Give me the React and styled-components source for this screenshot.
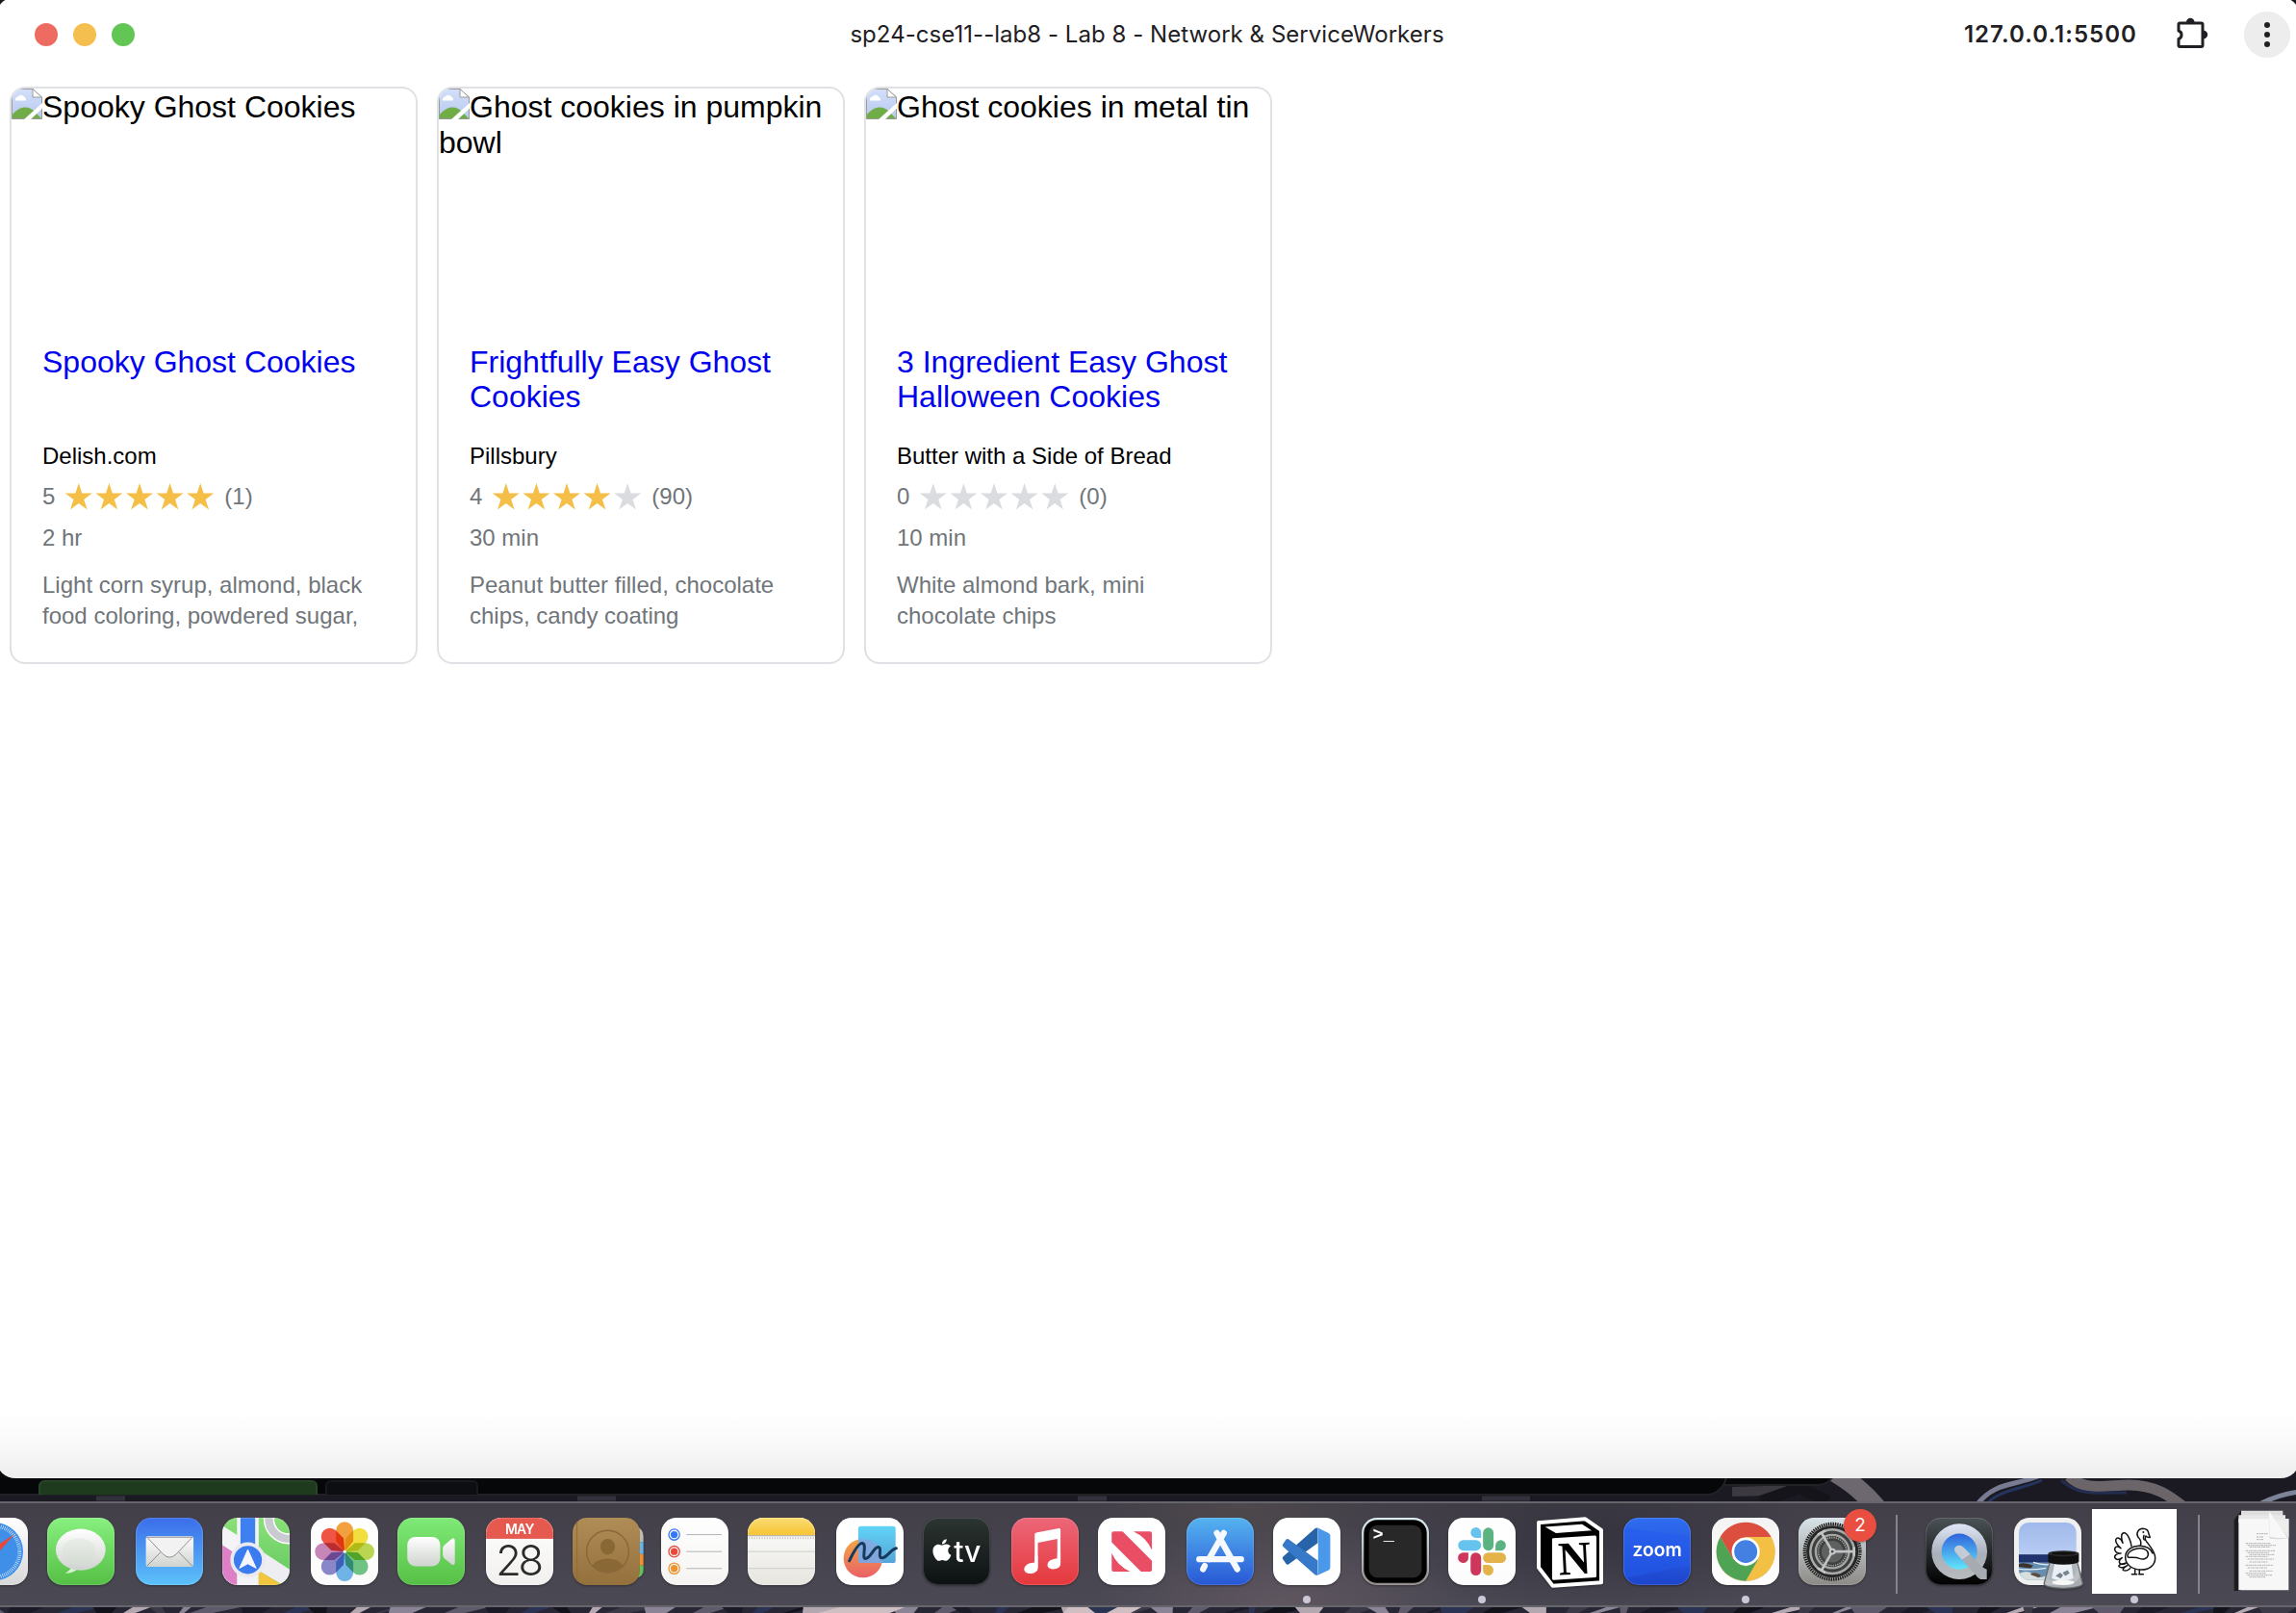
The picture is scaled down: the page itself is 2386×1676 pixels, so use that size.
import React from 'react';
import styled, { createGlobalStyle } from 'styled-components';
import { FaApple } from 'react-icons/fa';

const Global = createGlobalStyle`
  html, body { margin: 0; padding: 0; background: #17171d; }
  * { box-sizing: border-box; }
`;

const Desktop = styled.div`
  position: relative;
  display: flex;
  flex-direction: column;
  width: 2386px;
  height: 1676px;
  overflow: hidden;
  background: #17171d;
  font-family: 'Liberation Sans', Arial, sans-serif;
`;

const WallpaperSvg = styled.svg`
  position: absolute;
  left: 0;
  bottom: 0;
  width: 2386px;
  height: 150px;
`;

const BackWindow = styled.div`
  position: absolute;
  left: -30px;
  top: 1400px;
  width: ${(p) => p.$w}px;
  height: ${(p) => p.$h}px;
  border: 2px solid #222226;
  border-radius: 22px;
  background: #060709;
`;

const BackPanels = styled.div`
  display: flex;
  gap: 8px;
  padding: 136px 0 0 68px;
`;

const BackPanel = styled.div`
  width: ${(p) => p.$w}px;
  height: 15px;
  background: ${(p) => p.$bg};
  border: 2px solid ${(p) => p.$line};
  border-bottom: 0;
  border-radius: 6px 6px 0 0;
`;

const AppWindow = styled.div`
  position: relative;
  flex: none;
  display: flex;
  flex-direction: column;
  width: 2394px;
  height: 1539px;
  margin: -3px -4px 0;
  padding: 3px 4px 0;
  border-radius: 20px;
  background: linear-gradient(#fff 0, #fff 1470px, #f9f9f9 1505px, #ededed 1539px);
`;

const TitleBar = styled.header`
  display: grid;
  grid-template-columns: 1fr auto 1fr;
  align-items: center;
  height: 72px;
  padding: 0 6px 0 36px;
  font-family: Inter, sans-serif;
  color: #1f2024;
`;

const Lights = styled.div`
  display: flex;
  gap: 16px;
`;

const Light = styled.span`
  width: 24px;
  height: 24px;
  border-radius: 50%;
  background: ${(p) => p.$c};
`;

const PageTitle = styled.h1`
  margin: 0 32px 0 0;
  font-size: 24px;
  line-height: 30px;
  font-weight: 400;
  letter-spacing: 0.04px;
  white-space: nowrap;
`;

const Tools = styled.div`
  display: flex;
  justify-content: flex-end;
  align-items: center;
`;

const Address = styled.span`
  margin-right: 39px;
  font-size: 24px;
  line-height: 30px;
  font-weight: 600;
  letter-spacing: 1.05px;
`;

const Puzzle = styled.svg`
  width: 36px;
  height: 36px;
  margin-right: 36px;
`;

const MenuButton = styled.button`
  display: flex;
  flex-direction: column;
  align-items: center;
  justify-content: center;
  gap: 4px;
  width: 48px;
  height: 48px;
  padding: 0;
  border: 0;
  border-radius: 50%;
  background: #ededed;
`;

const MenuDot = styled.span`
  width: 6px;
  height: 6px;
  border-radius: 50%;
  background: #1f2024;
`;

const Recipes = styled.main`
  display: flex;
  align-items: flex-start;
  gap: 20px;
  padding: 18px 10px 0;
`;

const Card = styled.article`
  display: grid;
  grid-template-rows: 236px 112px 28px 36px 30px 72px;
  row-gap: 10px;
  align-items: center;
  width: 424px;
  padding: 0 32px 32px;
  border: 2px solid #dfe1e5;
  border-radius: 16px;
`;

const Missing = styled.div`
  height: 236px;
  margin: 0 -32px;
  border-radius: 14px 14px 0 0;
  overflow: hidden;
  font-size: 32px;
  line-height: 37px;
  color: #000;
`;

const AltText = styled.span`
  display: block;
  padding-top: 1px;
`;

const BrokenIcon = styled.svg`
  float: left;
  width: 32px;
  height: 32px;
`;

const Title = styled.p`
  height: 72px;
  margin: 0;
  font-size: 32px;
  line-height: 36px;
`;

const TitleLink = styled.a`
  color: #0000ee;
  text-decoration: none;
`;

const Org = styled.p`
  margin: 0;
  font-size: 24px;
  color: #000;
`;

const Rating = styled.div`
  display: flex;
  align-items: center;
  gap: 10px;
  font-size: 24px;
  color: #70757a;
`;

const Stars = styled.svg`
  width: 156px;
  height: 28px;
`;

const Time = styled.time`
  font-size: 24px;
  color: #70757a;
`;

const Ingredients = styled.p`
  height: 72px;
  margin: 0;
  padding-top: 8px;
  overflow: hidden;
  font-size: 24px;
  line-height: 32px;
  color: #70757a;
`;

const Dock = styled.nav`
  position: relative;
  flex: none;
  display: flex;
  align-items: flex-start;
  height: 110px;
  margin-top: 24px;
  border-top: 2px solid #67656c;
  border-bottom: 2px solid #67656c;
  background:
    radial-gradient(ellipse 190px 90px at 1330px 100%, rgba(112, 98, 106, 0.55), transparent),
    radial-gradient(ellipse 150px 70px at 1290px 0, rgba(82, 76, 76, 0.7), transparent),
    radial-gradient(ellipse 220px 90px at 1660px 30%, rgba(50, 48, 58, 0.8), transparent),
    linear-gradient(#423f49, #4b4954);
`;

const Apps = styled.div`
  display: flex;
  margin-left: -41px;
`;

const DockItem = styled.div`
  position: relative;
  flex: none;
  display: flex;
  flex-direction: column;
  align-items: center;
  width: 70px;
  height: 106px;
  padding-top: 15px;
  margin-right: ${(p) => p.$gap}px;
`;

const Icon = styled.svg`
  flex: none;
  display: block;
  width: 70px;
  height: 70px;
  overflow: visible;
  filter: drop-shadow(0 1px 1px rgba(0, 0, 0, 0.35));
`;

const Running = styled.span`
  width: 8px;
  height: 8px;
  margin-top: 11px;
  border-radius: 50%;
  background: #cbc7d6;
`;

const Badge = styled.span`
  position: absolute;
  left: 47px;
  top: 6px;
  width: 34px;
  height: 34px;
  border-radius: 50%;
  background: #e94e40;
  color: #fff;
  font: 400 19px/34px Inter, sans-serif;
  text-align: center;
  box-shadow: 0 1px 2px rgba(0, 0, 0, 0.3);
`;

const Separator = styled.span`
  flex: none;
  width: 2px;
  height: 82px;
  margin: 12px ${(p) => p.$right}px 0 ${(p) => p.$left}px;
  background: #85838b;
`;

const BigApp = styled.div`
  flex: none;
  display: flex;
  flex-direction: column;
  align-items: center;
  width: 88px;
  padding-top: 6px;
`;

const TurkeySvg = styled.svg`
  display: block;
  width: 88px;
  height: 88px;
  background: #fff;
`;

const BigRunning = styled(Running)`
  margin-top: 2px;
`;

const PapersSvg = styled.svg`
  flex: none;
  width: 58px;
  height: 86px;
  margin-top: 7px;
  overflow: visible;
`;

const STAR = 'M14 0 L17.4 10.6 H28 L19.4 16.9 L22.8 27.5 L14 21 L5.2 27.5 L8.6 16.9 L0 10.6 H10.6 Z';

const recipes = [
  { alt: 'Spooky Ghost Cookies', title: 'Spooky Ghost Cookies', org: 'Delish.com', score: 5, count: 1, time: '2 hr', ing: 'Light corn syrup, almond, black food coloring, powdered sugar,' },
  { alt: 'Ghost cookies in pumpkin bowl', title: 'Frightfully Easy Ghost Cookies', org: 'Pillsbury', score: 4, count: 90, time: '30 min', ing: 'Peanut butter filled, chocolate chips, candy coating' },
  { alt: 'Ghost cookies in metal tin', title: '3 Ingredient Easy Ghost Halloween Cookies', org: 'Butter with a Side of Bread', score: 0, count: 0, time: '10 min', ing: 'White almond bark, mini chocolate chips' },
];

function Broken() {
  return (
    <BrokenIcon viewBox="0 0 32 32">
      <defs>
        <linearGradient id="sky" x1="0" y1="0" x2="0" y2="1">
          <stop offset="0" stopColor="#d3e0fb" />
          <stop offset="1" stopColor="#b6c8ee" />
        </linearGradient>
      </defs>
      <path d="M.5 .5H22L31.500 9V31.500H.5Z" fill="url(#sky)" stroke="#9a9a9a" />
      <path d="M4 12.500a3 3 0 0 1 2.500-4 4 4 0 0 1 7 .5 2.200 2.200 0 0 1 1 3.500Z" fill="#fff" />
      <path d="M1 31V27C8 18 18 17 24 24L31 31Z" fill="#70ad47" />
      <path d="M13 32L32 15V20.500L20 32Z" fill="#fff" />
      <path d="M22 .5V9H31.500Z" fill="#fff" stroke="#9a9a9a" />
    </BrokenIcon>
  );
}

function Recipe({ r }) {
  return (
    <Card>
      <Missing><Broken /><AltText>{r.alt}</AltText></Missing>
      <Title><TitleLink>{r.title}</TitleLink></Title>
      <Org>{r.org}</Org>
      <Rating>
        <span>{r.score}</span>
        <Stars viewBox="0 0 156 28">
          {[0, 1, 2, 3, 4].map((i) => (
            <path key={i} d={STAR} transform={`translate(${0.8 + i * 31.6} 0)`} fill={i < r.score ? '#f4be47' : '#dadce0'} />
          ))}
        </Stars>
        <span>({r.count})</span>
      </Rating>
      <Time>{r.time}</Time>
      <Ingredients>{r.ing}</Ingredients>
    </Card>
  );
}

function Tile({ id, from, to, children }) {
  return (
    <Icon viewBox="0 0 211 211">
      <defs>
        <linearGradient id={`${id}-bg`} x1="0" y1="0" x2="0" y2="1">
          <stop offset="0" stopColor={from} />
          <stop offset="1" stopColor={to} />
        </linearGradient>
        <clipPath id={`${id}-clip`}><rect width="211" height="211" rx="48" /></clipPath>
        <linearGradient id={`${id}-w`} x1="0" y1="0" x2="0" y2="1">
          <stop offset="0" stopColor="#fff" />
          <stop offset="1" stopColor="#cfd3cf" />
        </linearGradient>
      </defs>
      <rect width="211" height="211" rx="48" fill={`url(#${id}-bg)`} />
      <g clipPath={`url(#${id}-clip)`}>{children}</g>
      <rect x="1" y="1" width="209" height="209" rx="47" fill="none" stroke="#fff" strokeOpacity=".25" strokeWidth="2" />
    </Icon>
  );
}

const Safari = () => (
  <Tile id="saf" from="#ffffff" to="#d8d8d8">
    <circle cx="105" cy="106" r="91" fill="#3f8fe8" />
    <circle cx="105" cy="106" r="80" fill="none" stroke="#d5e8fb" strokeWidth="12" strokeDasharray="2 4" />
    <path d="M168 53L97 97L114 114Z" fill="#e8483b" />
    <path d="M42 168L97 97L114 114Z" fill="#f4f4f4" />
  </Tile>
);

const Messages = () => (
  <Tile id="msg" from="#87f07f" to="#55bf45">
    <path d="M78 145Q76 165 56 174Q82 174 98 158Z" fill="#d6f0d2" />
    <ellipse cx="105" cy="100" rx="78" ry="65" fill="url(#msg-w)" />
    <ellipse cx="100" cy="104" rx="52" ry="40" fill="#cfe0cc" opacity=".3" />
  </Tile>
);

const Mail = () => (
  <Tile id="mail" from="#3b6dea" to="#5cc2fa">
    <rect x="32" y="58" width="149" height="96" rx="7" fill="url(#mail-w)" />
    <path d="M36 151L78 108M177 151L135 108" stroke="#8f8f8f" strokeWidth="3" fill="none" />
    <path d="M35 61L86 114Q106 134 127 114L178 61Z" fill="#f2f2f2" stroke="#8f8f8f" strokeWidth="3" />
  </Tile>
);

const Maps = () => (
  <Tile id="maps" from="#8bdf78" to="#60c95e">
    <path d="M0 25L48 55V211H0Z" fill="#f4f4f6" />
    <path d="M0 85L50 118V211H0Z" fill="#dd80c6" />
    <rect x="46" width="68" height="211" fill="#f3f3f7" />
    <path d="M100 90L211 162V211H190L100 158Z" fill="#ededf2" />
    <path d="M114 166L188 211H114Z" fill="#f3c53d" />
    <rect x="57" width="46" height="110" fill="#3f80f0" />
    <circle cx="208" cy="4" r="62" fill="none" stroke="#fff" strokeWidth="34" />
    <circle cx="208" cy="4" r="62" fill="none" stroke="#c9cbd1" strokeWidth="25" />
    <circle cx="80" cy="132" r="55" fill="#e9e9ef" />
    <circle cx="80" cy="132" r="44" fill="#3a7bf0" />
    <path d="M80 100L106 158L80 144L54 158Z" fill="#f5f6fa" stroke="#f5f6fa" strokeWidth="3" strokeLinejoin="round" />
  </Tile>
);

const PETALS = ['#f2a13e', '#f2df3e', '#b9d552', '#70c383', '#70b3e6', '#8a87c9', '#c687b8', '#ee5542'];

const Petal = styled.path`
  mix-blend-mode: multiply;
`;

const Photos = () => (
  <Tile id="pho" from="#ffffff" to="#fbfbfb">
    {PETALS.map((c, i) => (
      <Petal key={c} d="M106 106L79 74V40a27 27 0 0 1 54 0V74Z" fill={c} transform={`rotate(${i * 45} 106 106)`} />
    ))}
    <circle cx="106" cy="106" r="5" fill="#fff" />
  </Tile>
);

const FaceTime = () => (
  <Tile id="ft" from="#80ea78" to="#55bf45">
    <rect x="31" y="60" width="103" height="92" rx="25" fill="url(#ft-w)" />
    <path d="M142 96Q142 90 147 86L170 66Q180 60 180 72V140Q180 152 170 146L147 127Q142 123 142 117Z" fill="url(#ft-w)" />
  </Tile>
);

const Calendar = () => (
  <Tile id="cal" from="#ffffff" to="#f1f0ee">
    <rect width="211" height="66" fill="#e5594f" />
    <text x="106" y="51" textAnchor="middle" fontFamily="Inter, sans-serif" fontSize="42" fontWeight="600" fill="#fff" textLength="92">MAY</text>
    <text x="106" y="180" textAnchor="middle" fontFamily="Inter, sans-serif" fontSize="131" fontWeight="300" fill="#2b2b2b" textLength="150">28</text>
  </Tile>
);

const Contacts = () => (
  <Icon viewBox="0 0 211 211">
    <defs>
      <linearGradient id="con-b" x1="0" y1="0" x2="0" y2="1">
        <stop offset="0" stopColor="#b08c56" />
        <stop offset="1" stopColor="#94703d" />
      </linearGradient>
      <clipPath id="con-c"><circle cx="110" cy="106" r="65" /></clipPath>
    </defs>
    <path d="M200 27q22 8 22 32v17h-22z" fill="#bcbab4" />
    <rect x="200" y="76" width="22" height="38" fill="#62b5ef" />
    <rect x="200" y="114" width="22" height="36" fill="#f08f2e" />
    <path d="M200 150h22v15q0 18-22 24z" fill="#5fc35c" />
    <rect width="211" height="211" rx="46" fill="url(#con-b)" />
    <path d="M14 12V199" stroke="#8f6c3a" strokeWidth="3" />
    <circle cx="110" cy="106" r="66" fill="none" stroke="#87673a" strokeWidth="4" />
    <ellipse cx="110" cy="91" rx="23" ry="25" fill="#8a6836" />
    <ellipse cx="110" cy="166" rx="53" ry="38" fill="#8a6836" clipPath="url(#con-c)" />
  </Icon>
);

const Reminders = () => (
  <Tile id="rem" from="#ffffff" to="#f5f4f2">
    {[['#3478f6', 53], ['#e74a3c', 106], ['#eb9430', 159]].map(([c, y]) => (
      <g key={c}>
        <circle cx="41" cy={y} r="17" fill="none" stroke={c} strokeWidth="4" />
        <circle cx="41" cy={y} r="11" fill={c} />
        <path d={`M79 ${y}H190`} stroke="#b3b3b6" strokeWidth="3" />
      </g>
    ))}
  </Tile>
);

const Notes = () => (
  <Tile id="not" from="#ffffff" to="#e6e5df">
    <defs>
      <linearGradient id="not-y" x1="0" y1="0" x2="0" y2="1"><stop offset="0" stopColor="#fbdc74" /><stop offset="1" stopColor="#f6c433" /></linearGradient>
    </defs>
    <rect width="211" height="54" fill="url(#not-y)" />
    <path d="M0 56H211" stroke="#b9b5a6" strokeWidth="4" />
    <path d="M4 64H211" stroke="#bdbdba" strokeWidth="6" strokeDasharray="3 5" />
    <path d="M0 106H211M0 159H211" stroke="#cfcfcd" strokeWidth="3" />
  </Tile>
);

const Freeform = () => (
  <Tile id="fre" from="#ffffff" to="#ffffff">
    <defs>
      <linearGradient id="fre-o" x1="0" y1="0" x2="0" y2="1"><stop offset="0" stopColor="#f2a843" /><stop offset="1" stopColor="#ea6168" /></linearGradient>
      <linearGradient id="fre-s" x1="0" y1="0" x2="0" y2="1"><stop offset="0" stopColor="#61d4f7" /><stop offset="1" stopColor="#56a5d9" /></linearGradient>
    </defs>
    <circle cx="84" cy="127" r="61" fill="url(#fre-o)" />
    <rect x="69" y="26" width="117" height="116" rx="8" fill="url(#fre-s)" />
    <path d="M69 66H84A61 61 0 0 1 143 142H77Q69 142 69 134Z" fill="#8da4dc" opacity=".75" />
    <path d="M41 135C52 112 70 78 82 80C98 83 78 128 92 128C108 128 118 90 132 92C146 94 128 124 142 126C156 128 172 98 188 96" fill="none" stroke="#16395c" strokeWidth="9" strokeLinecap="round" />
  </Tile>
);

const Tv = () => (
  <Tile id="tv" from="#2c3531" to="#0c1012">
    <FaApple x="21" y="62" size={78} color="#fff" />
    <text x="97" y="138" fontFamily="Inter, sans-serif" fontSize="90" fontWeight="500" fill="#fff" textLength="85" lengthAdjust="spacingAndGlyphs">tv</text>
  </Tile>
);

const Music = () => (
  <Tile id="mus" from="#ec6779" to="#e5383d">
    <g fill="#fff">
      <path d="M73 53Q73 48 78 47L149 33Q154 32 154 38V142H144V66L83 78V156H73Z" />
      <path d="M83 150V158C83 168 70 176 56 175C44 174 38 166 41 157C46 143 60 142 73 140V120H83Z" />
      <path d="M154 138V145C154 155 144 161 130 161C116 160 111 152 114 143C118 131 132 129 144 127V110H154Z" />
    </g>
  </Tile>
);

const News = () => (
  <Tile id="new" from="#ffffff" to="#ffffff">
    <g fill="#e94e64">
      <path d="M43 49Q43 43 49 43H77L169 135V163Q169 169 163 169H135L43 77Z" />
      <path d="M111 43H163Q169 43 169 49V101Q151 61 111 43Z" />
      <path d="M43 111Q61 151 101 169H49Q43 169 43 163Z" />
    </g>
  </Tile>
);

const AppStore = () => (
  <Tile id="aps" from="#55b3f0" to="#2857d6">
    <g stroke="#f5f8fd" strokeWidth="19" strokeLinecap="round" fill="none">
      <path d="M40 130H171" />
      <path d="M117 48L70 130" />
      <path d="M95 48L159 161" />
      <path d="M57 151L52 161" />
    </g>
  </Tile>
);

const VsCode = () => (
  <Tile id="vsc" from="#ffffff" to="#ffffff">
    <path d="M31 130Q27 126 32 121L132 33L140 32V79L48 146Q44 148 41 145Z" fill="#2763a8" />
    <path d="M31 82Q27 86 32 91L132 179L140 180V134L48 67Q44 65 41 68Z" fill="#3579c8" />
    <path d="M138 31L174 48Q179 51 179 56V156Q179 161 174 164L138 181Q141 178 141 172V40Q141 34 138 31Z" fill="#4a98ea" />
  </Tile>
);

const Terminal = () => (
  <Tile id="ter" from="#d9ecf2" to="#8a8782">
    <rect x="7" y="7" width="197" height="197" rx="41" fill="#000" />
    <rect x="23" y="23" width="165" height="165" rx="27" fill="#282828" />
    <text x="35" y="70" fontFamily="'Liberation Mono', monospace" fontSize="56" fontWeight="700" fill="#fff">&gt;_</text>
  </Tile>
);

const Slack = () => (
  <Tile id="sla" from="#ffffff" to="#fcfcfc">
    <g fill="#66c3ee"><rect x="31" y="70" width="72" height="33" rx="16.500" /><path d="M103 63H86.500A16.300 16.300 0 1 1 103 47Z" /></g>
    <g fill="#5bb381"><rect x="109" y="31" width="33" height="72" rx="16.500" /><path d="M148 103V86.500A16.300 16.300 0 1 1 164 103Z" /></g>
    <g fill="#e3b34a"><rect x="109" y="109" width="72" height="33" rx="16.500" /><path d="M109 148H125.500A16.300 16.300 0 1 1 109 164Z" /></g>
    <g fill="#ce375c"><rect x="70" y="109" width="33" height="72" rx="16.500" /><path d="M63 109V125.500A16.300 16.300 0 1 1 47 109Z" /></g>
  </Tile>
);

const Notion = () => (
  <Icon viewBox="0 0 211 211">
    <path d="M13 15L152 4L202 39V203L50 213L6 156V15Z" fill="#000" stroke="#fff" strokeWidth="12" strokeLinejoin="round" />
    <path d="M26 29L142 20L172 40L60 48Z" fill="#fff" />
    <path d="M48 68Q48 64 52 64L182 56Q187 56 187 61V182Q187 187 182 187L52 195Q48 195 48 191Z" fill="#fff" />
    <text x="118" y="177" textAnchor="middle" fontFamily="'Liberation Serif', serif" fontSize="148" fontWeight="700" fill="#000" transform="rotate(-3 118 125)" textLength="102" lengthAdjust="spacingAndGlyphs">N</text>
  </Icon>
);

const Zoom = () => (
  <Tile id="zoo" from="#2f6df0" to="#1d45cc">
    <path d="M0 30L211 60V150L0 190Z" fill="#235af0" opacity=".5" />
    <text x="29" y="121" fontFamily="Inter, sans-serif" fontSize="60" fontWeight="600" fill="#fff" textLength="154" lengthAdjust="spacingAndGlyphs">zoom</text>
  </Tile>
);

const Chrome = () => (
  <Tile id="chr" from="#f3f3f3" to="#ffffff">
    <circle cx="106" cy="108" r="92" fill="#c9a24a" opacity=".5" />
    <path d="M26.300 60A92 92 0 0 1 185.700 60H106L66 129Z" fill="#dc4f3f" />
    <path d="M185.700 60A92 92 0 0 1 106 198L146 129L106 60Z" fill="#f3c043" />
    <path d="M106 198A92 92 0 0 1 26.300 60L66 129L106 152L146 129Z" fill="#4fa354" />
    <circle cx="106" cy="106" r="44" fill="#fff" />
    <circle cx="106" cy="106" r="36" fill="#447fe2" />
  </Tile>
);

const Settings = () => (
  <Tile id="set" from="#d8e4ea" to="#8c8a85">
    <circle cx="106" cy="106" r="87" fill="#a8a9a8" />
    <circle cx="106" cy="106" r="87" fill="none" stroke="#1c1c1c" strokeWidth="10" strokeDasharray="4.200 3" />
    <circle cx="106" cy="106" r="77" fill="#a9aaaa" stroke="#262626" strokeWidth="9" />
    <circle cx="106" cy="106" r="65" fill="#3e3f3f" />
    <circle cx="106" cy="106" r="52" fill="none" stroke="#a5a5a4" strokeWidth="7" />
    <circle cx="106" cy="106" r="44" fill="none" stroke="#9b9b9a" strokeWidth="5" strokeDasharray="4 3" />
    <circle cx="106" cy="106" r="34" fill="#5f6060" />
    {[0, 120, 240].map((a) => (
      <path key={a} d="M106 106H176M174 92V120" stroke="#bfc4c5" strokeWidth="8" fill="none" transform={`rotate(${a} 106 106)`} />
    ))}
    <circle cx="106" cy="106" r="10" fill="#c6caca" />
    <circle cx="106" cy="106" r="4" fill="#4d4e4e" />
  </Tile>
);

const QuickTime = () => (
  <Tile id="qt" from="#4b5256" to="#000000">
    <defs>
      <linearGradient id="qt-s" x1="0" y1="0" x2="0" y2="1"><stop offset="0" stopColor="#dfe6f6" /><stop offset=".55" stopColor="#a9b0ba" /><stop offset="1" stopColor="#b9bbbd" /></linearGradient>
      <linearGradient id="qt-b" x1="0" y1="0" x2="0" y2="1"><stop offset="0" stopColor="#2f63dc" /><stop offset="1" stopColor="#62e6fb" /></linearGradient>
    </defs>
    <circle cx="106" cy="106" r="87" fill="url(#qt-s)" />
    <circle cx="106" cy="106" r="56" fill="url(#qt-b)" />
    <path d="M95 110Q86 98 96 90Q107 83 118 92L172 148Q180 158 192 162V193H172Q163 190 156 178Z" fill="#a6abb1" />
    <path d="M94 108Q86 98 96 90Q107 83 118 92L140 114L114 132Z" fill="#c3cbd6" />
  </Tile>
);

const Preview = () => (
  <Icon viewBox="0 0 211 211">
    <defs>
      <clipPath id="pre-c"><rect x="15" y="15" width="180" height="180" rx="32" /></clipPath>
      <linearGradient id="pre-s" x1="0" y1="0" x2="0" y2="1"><stop offset="0" stopColor="#9bb6ea" /><stop offset="1" stopColor="#b9cdf3" /></linearGradient>
    </defs>
    <rect width="211" height="211" rx="48" fill="#f1f0f0" />
    <g clipPath="url(#pre-c)">
      <rect width="211" height="116" fill="url(#pre-s)" />
      <rect y="115" width="211" height="30" fill="#20336d" />
      <rect y="140" width="211" height="60" fill="#668eb0" />
      <path d="M10 148Q30 136 60 150L52 158L14 154Z" fill="#3a332d" />
      <path d="M10 178Q40 160 60 178T110 176V200H10Z" fill="#d8dfdf" />
      <path d="M50 178Q64 166 84 180L78 188Z" fill="#5d4a38" />
      <path d="M12 160Q50 166 100 158M60 140Q90 150 120 146" stroke="#e4ecf0" strokeWidth="4" fill="none" />
    </g>
    <path d="M112 140L94 206Q96 219 154 221Q212 219 215 206L198 140Z" fill="#b5babf" fillOpacity=".9" stroke="#66696c" strokeWidth="4" />
    <path d="M127 145L118 190Q152 204 186 190L180 145Z" fill="#eaf0f5" />
    <path d="M130 182l14-10 10 8-8 10zM152 172l16-8 6 10-14 8z" fill="#77838d" />
    <ellipse cx="154" cy="203" rx="35" ry="8" fill="#f7f7f7" />
    <path d="M107 112V138Q112 146 155 147Q198 146 203 138V112Z" fill="#111" />
    <ellipse cx="155" cy="112" rx="48" ry="9" fill="#2b2b2b" />
    <ellipse cx="155" cy="112" rx="38" ry="5" fill="#111" />
  </Icon>
);

const Turkey = () => (
  <TurkeySvg viewBox="0 0 264 264">
    <g fill="none" stroke="#151515" strokeWidth="4.500" strokeLinecap="round" strokeLinejoin="round">
      <path d="M151 113C155 103 150 94 144 88C136 76 144 62 158 61C170 61 176 68 177 78L181 88C176 90 172 88 168 84C164 90 166 97 172 104C182 118 197 134 197 152C197 174 180 189 154 189C126 189 104 174 104 150C104 128 126 113 151 115C170 116 184 126 189 138" />
      <path d="M162 82C158 90 162 98 166 96" />
      <path d="M112 150C108 142 118 124 148 122C166 121 178 132 175 144C172 156 158 158 148 154C136 148 124 152 112 150Z" />
      <path d="M123 116C122 104 112 74 100 74C90 74 90 90 96 106C90 88 76 86 74 97C73 106 84 116 90 122C80 112 70 118 71 127C73 136 84 138 90 138C76 138 68 146 72 153C77 160 88 156 94 152C84 158 82 168 90 171C96 173 102 170 106 168" />
      <path d="M102 171C92 170 82 174 84 179C88 185 102 182 110 176C100 182 94 188 98 191C106 194 116 190 120 183" />
      <path d="M134 189V201M148 189V201M124 203H140M146 203H160" />
    </g>
    <circle cx="160" cy="72" r="3" fill="#151515" />
  </TurkeySvg>
);

const LINES = [74, 84, 92, 104, 110, 115, 127, 133, 139, 145, 153, 162, 172, 180, 190, 197, 203, 209];
const Papers = () => (
  <PapersSvg viewBox="0 0 174 258">
    <path d="M2 30L24 2V252H2Z" fill="#1d1c20" />
    <path d="M24 2H154V30H24Z" fill="#dedede" />
    <path d="M16 16H162V40H16Z" fill="#e8e8e8" />
    <path d="M16 28H172V250H16Z" fill="#f7f7f7" />
    {LINES.map((y, i) => (
      <path key={y} d={i < 3 ? `M72 ${y}H${i ? 94 : 108}` : `M${38 + (i % 3) * 6} ${y}H${100 + ((i * 17) % 36)}`} stroke="#a3a3a3" strokeWidth="2.500" strokeDasharray="7 2 4 1" />
    ))}
    <path d="M111 28H172V88Q130 94 113 88Z" fill="#d9d9d9" />
    <path d="M118 28H172V84Z" fill="#ededed" />
    <path d="M111 4L168 86Q130 90 113 82Z" fill="#f8f8f8" />
  </PapersSvg>
);

const pinned = [
  [Safari], [Messages], [Mail], [Maps], [Photos], [FaceTime], [Calendar], [Contacts], [Reminders],
  [Notes], [Freeform], [Tv], [Music], [News], [AppStore], [VsCode, 1], [Terminal], [Slack, 1],
  [Notion], [Zoom], [Chrome, 1], [Settings, 0, 2],
];

function Wallpaper() {
  const streaks = [];
  let x = 0;
  for (let i = 0; x < 2386; i += 1) {
    const w = 8 + ((i * 31) % 37);
    const lean = ((i * 17) % 41) - 14;
    streaks.push(
      <path
        key={i}
        d={`M${x} 150L${x + lean} 142H${x + lean + w}L${x + w * 0.6} 150Z`}
        fill={['#5f5b6c', '#12121b', '#8a8496', '#2b3355', '#3d3a48', '#1a1a26', '#b3a7b0'][(i * 5) % 7]}
      />
    );
    x += w + ((i * 13) % 19);
  }
  return (
    <WallpaperSvg viewBox="0 0 2386 150">
      <rect width="2386" height="150" fill="#1b1a22" />
      <rect y="140" width="2386" height="10" fill="#272634" />
      {streaks}
      <path d="M850 150L880 142H945L925 150ZM1105 150L1112 142H1190L1175 150Z" fill="#cfbfc2" />
      <path d="M1128 142H1165L1150 150H1138Z" fill="#2b3352" />
      <g fill="none">
        <path d="M1900 0C1925 14 1938 26 1950 40" stroke="#6d6870" strokeWidth="20" />
        <path d="M2054 38C2072 14 2092 18 2118 8" stroke="#787c92" strokeWidth="5" />
        <path d="M2060 41C2078 20 2098 23 2122 12" stroke="#23345f" strokeWidth="3" />
        <path d="M2150 8C2166 24 2190 17 2212 17C2240 17 2255 28 2272 42" stroke="#6b6569" strokeWidth="11" />
        <path d="M2142 12C2160 30 2185 24 2210 25" stroke="#222d50" strokeWidth="3" />
        <path d="M2350 36Q2370 26 2390 24" stroke="#7d8498" strokeWidth="5" />
        <path d="M1800 24L1870 22" stroke="#3c3a40" strokeWidth="10" />
        <path d="M1830 34L1870 20L1900 34" stroke="#15141a" strokeWidth="12" />
        <path d="M100 31H130M600 31H640M1120 31H1150M1540 31H1590" stroke="#33323c" strokeWidth="5" />
      </g>
    </WallpaperSvg>
  );
}

export default function App() {
  return (
    <>
      <Global />
      <Desktop>
        <Wallpaper />
        <BackWindow $w={1940} $h={144} />
        <BackWindow $w={1825} $h={154}>
          <BackPanels>
            <BackPanel $w={290} $bg="#1f3b1d" $line="#28452a" />
            <BackPanel $w={159} $bg="#0d0e11" $line="#18191c" />
          </BackPanels>
        </BackWindow>
        <AppWindow>
          <TitleBar>
            <Lights>
              <Light $c="#ed6b60" />
              <Light $c="#f5bf4f" />
              <Light $c="#62c655" />
            </Lights>
            <PageTitle>sp24-cse11--lab8 - Lab 8 - Network &amp; ServiceWorkers</PageTitle>
            <Tools>
              <Address>127.0.0.1:5500</Address>
              <Puzzle viewBox="0 0 36 36">
                <path d="M5.500 6H27.500Q29 6 29 7.500V29Q29 30.500 27.500 30.500H5.500Q4 30.500 4 29V22.500A4.500 4.500 0 0 0 4 14V7.500Q4 6 5.500 6Z" fill="none" stroke="#1f2024" strokeWidth="3" strokeLinejoin="round" />
                <path d="M12 5A4.200 4.200 0 0 1 20.500 5ZM30 13.800A4.200 4.200 0 0 1 30 22.200Z" fill="#1f2024" />
              </Puzzle>
              <MenuButton>
                <MenuDot /><MenuDot /><MenuDot />
              </MenuButton>
            </Tools>
          </TitleBar>
          <Recipes>
            {recipes.map((r) => <Recipe key={r.org} r={r} />)}
          </Recipes>
        </AppWindow>
        <Dock>
          <Apps>
            {pinned.map(([Art, running, badge], i) => (
              <DockItem key={i} $gap={i === pinned.length - 1 ? 0 : i % 2 ? 22 : 20}>
                <Art />
                {running ? <Running /> : null}
                {badge ? <Badge>{badge}</Badge> : null}
              </DockItem>
            ))}
          </Apps>
          <Separator $left={31} $right={29} />
          <DockItem $gap={22}><QuickTime /></DockItem>
          <DockItem $gap={11}><Preview /></DockItem>
          <BigApp>
            <Turkey />
            <BigRunning />
          </BigApp>
          <Separator $left={22} $right={35} />
          <Papers />
        </Dock>
      </Desktop>
    </>
  );
}
